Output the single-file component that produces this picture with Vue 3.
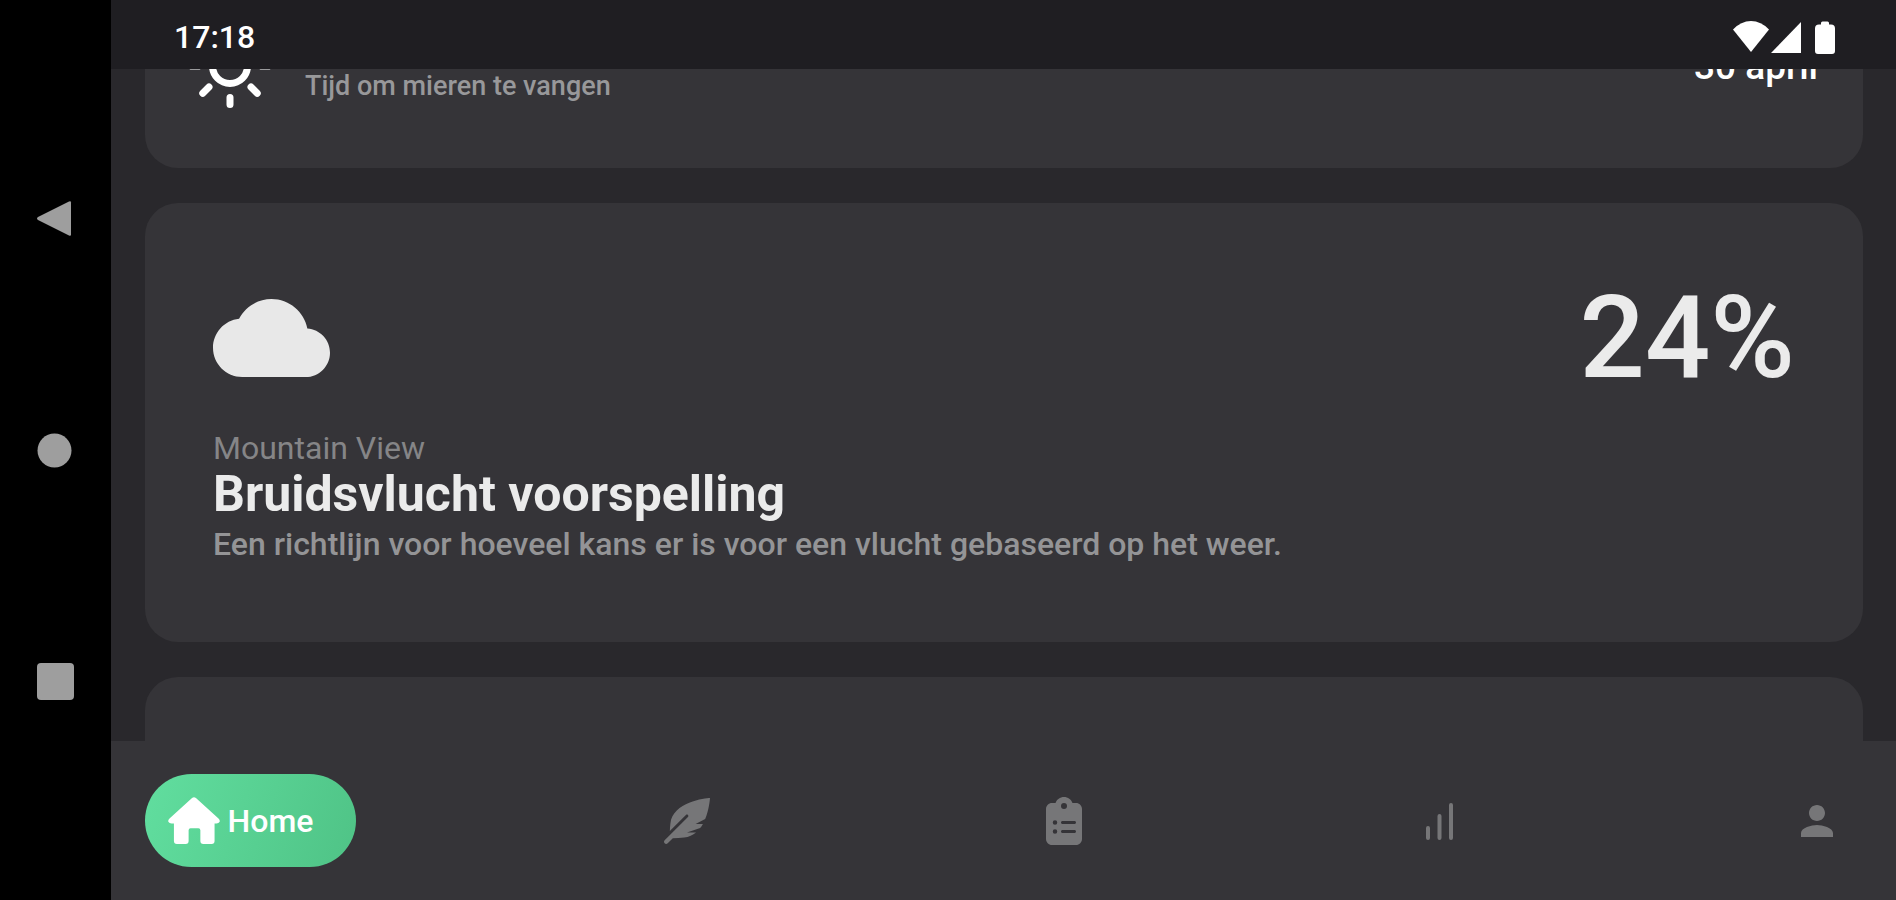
<script setup>
import { ref } from 'vue'

const active = ref('home')

const tabs = [
  {
    id: 'species',
    label: 'Soorten',
    viewBox: '0 0 512 512',
    width: 46,
    height: 46,
    path: 'M512 0C460.22 3.56 96.44 38.2 71.01 287.61c-3.09 26.66-4.84 53.44-5.99 80.24l178.87-178.69c6.25-6.25 16.4-6.25 22.65 0s6.25 16.38 0 22.63L7.04 471.03c-9.38 9.37-9.38 24.57 0 33.94 9.38 9.37 24.6 9.37 33.98 0l57.13-57.07c42.09-.14 84.15-2.53 125.96-7.36 53.48-5.44 97.02-26.47 132.58-56.54H255.74l146.79-48.88c11.25-14.89 21.37-30.71 30.45-47.12h-81.14l106.54-53.21C500.29 132.86 510.19 26.26 512 0z'
  },
  {
    id: 'tasks',
    label: 'Taken',
    viewBox: '0 0 384 512',
    width: 36,
    height: 48,
    path: 'M192 0c-41.8 0-77.4 26.7-90.5 64H64C28.7 64 0 92.7 0 128V448c0 35.3 28.7 64 64 64H320c35.3 0 64-28.7 64-64V128c0-35.3-28.7-64-64-64H282.5C269.4 26.7 233.8 0 192 0zm0 64a32 32 0 1 1 0 64 32 32 0 1 1 0-64zM72 272a24 24 0 1 1 48 0 24 24 0 1 1 -48 0zm104-16H304c8.8 0 16 7.2 16 16s-7.2 16-16 16H176c-8.8 0-16-7.2-16-16s7.2-16 16-16zM72 368a24 24 0 1 1 48 0 24 24 0 1 1 -48 0zm88 0c0-8.8 7.2-16 16-16H304c8.8 0 16 7.2 16 16s-7.2 16-16 16H176c-8.8 0-16-7.2-16-16z'
  },
  {
    id: 'stats',
    label: 'Statistieken',
    viewBox: '0 0 30 40',
    width: 30,
    height: 40,
    path: 'M3 25a2 2 0 0 1 2 2v10a2 2 0 0 1-4 0v-10a2 2 0 0 1 2-2zM14.5 13a2 2 0 0 1 2 2v22a2 2 0 0 1-4 0v-22a2 2 0 0 1 2-2zM26 2a2 2 0 0 1 2 2v33a2 2 0 0 1-4 0v-33a2 2 0 0 1 2-2z'
  },
  {
    id: 'profile',
    label: 'Profiel',
    viewBox: '4 4 16 16',
    width: 32,
    height: 32,
    path: 'M12 12c2.21 0 4-1.79 4-4s-1.79-4-4-4-4 1.79-4 4 1.79 4 4 4zm0 2c-2.67 0-8 1.34-8 4v2h16v-2c0-2.66-5.33-4-8-4z'
  }
]
</script>

<template>
  <div class="device">
    <div class="system-nav">
      <button type="button" aria-label="Terug">
        <svg width="37" height="37" viewBox="0 0 37 37"><path d="M32 1.5q2-1 2 1v32q0 2-2 1L1 20q-2-1.500 0-3z" /></svg>
      </button>
      <button type="button" aria-label="Startscherm">
        <svg width="37" height="37" viewBox="0 0 37 37"><circle cx="17.5" cy="18.5" r="17" /></svg>
      </button>
      <button type="button" aria-label="Recente apps">
        <svg width="37" height="37" viewBox="0 0 37 37"><rect width="37" height="37" rx="4" /></svg>
      </button>
    </div>

    <div class="app">
      <header class="status-bar">
        <time>17:18</time>
        <div class="status-icons">
          <svg width="36" height="32" viewBox="0 0 36 32"><path d="M0 8.5Q8 0 18 0t18 8.500L18 31z" /></svg>
          <svg width="30" height="31" viewBox="0 0 30 31"><path d="M30 0v31H0z" /></svg>
          <svg class="battery" width="20" height="33" viewBox="0 0 20 33"><path d="M6 2q0-1.500 1.500-1.500h5Q14 .5 14 2v1.500h2q4 0 4 4V30q0 3-3 3H3q-3 0-3-3V7.500q0-4 4-4h2z" /></svg>
        </div>
      </header>

      <main class="feed">
        <div class="feed-list">
          <section class="card today">
            <svg class="sun" width="84" height="84" viewBox="0 0 24 24">
              <circle cx="12" cy="12" r="5" />
              <path d="M12 1v2M12 21v2M4.220 4.220l1.420 1.420M18 18l1.780 1.780M1 12h2M21 12h2M4.220 19.780l1.780-1.780M18.360 5.640l1.420-1.420" />
            </svg>
            <p class="subtitle">Tijd om mieren te vangen</p>
            <time class="date">30 april</time>
          </section>

          <section class="card forecast">
            <div class="forecast-head">
              <svg class="cloud" width="117" height="78" viewBox="0 4 24 16">
                <path d="M19.35 10.04C18.67 6.59 15.64 4 12 4 9.11 4 6.6 5.64 5.35 8.04 2.34 8.36 0 10.91 0 14c0 3.31 2.69 6 6 6h13c2.76 0 5-2.24 5-5 0-2.64-2.05-4.78-4.65-4.96z" />
              </svg>
              <span class="chance">24%</span>
            </div>
            <p class="location">Mountain View</p>
            <h2>Bruidsvlucht voorspelling</h2>
            <p class="description">Een richtlijn voor hoeveel kans er is voor een vlucht gebaseerd op het weer.</p>
          </section>

          <section class="card next"></section>
        </div>
      </main>

      <nav class="tab-bar">
        <button type="button" class="tab home" :class="{ active: active === 'home' }" @click="active = 'home'">
          <svg width="52" height="47" viewBox="0 0 53 48">
            <path d="M24.5 1q2-1.500 4 0L51.500 22q2 2 1 3.500-.8 1.500-3 1.500H47.500V45q0 3-3 3H36q-3 0-3-3V34q0-2-2-2h-8q-2 0-2 2v11q0 3-3 3H9q-3 0-3-3V27H3.500q-2.200 0-3-1.500-1-1.500 1-3.500z" />
          </svg>
          <span>Home</span>
        </button>
        <button
          v-for="tab in tabs"
          :key="tab.id"
          type="button"
          class="tab"
          :class="{ active: active === tab.id }"
          :aria-label="tab.label"
          @click="active = tab.id"
        >
          <svg :width="tab.width" :height="tab.height" :viewBox="tab.viewBox"><path :d="tab.path" /></svg>
        </button>
      </nav>
    </div>
  </div>
</template>

<style>
body {
  margin: 0;
  background: #000;
}
</style>

<style scoped>
.device {
  display: flex;
  height: 100vh;
  font-family: Roboto, sans-serif;
  color: #ebebeb;
  background: #29282c;
}

button {
  display: flex;
  align-items: center;
  padding: 0;
  border: 0;
  background: none;
  font: inherit;
  cursor: pointer;
}

svg {
  display: block;
  flex: none;
}

h2,
p {
  margin: 0;
}

/* Android navigation */
.system-nav {
  flex: none;
  box-sizing: border-box;
  width: 111px;
  padding: 6px 0 6px 37px;
  display: flex;
  flex-direction: column;
  align-items: flex-start;
  justify-content: space-evenly;
  background: #000;
}

.system-nav svg {
  fill: #9e9e9e;
}

.app {
  flex: 1;
  min-width: 0;
  display: flex;
  flex-direction: column;
}

.status-bar {
  flex: none;
  box-sizing: border-box;
  height: 69px;
  padding: 5px 61px 0 63px;
  display: flex;
  align-items: center;
  justify-content: space-between;
  background: #1f1e22;
  color: #fff;
  font-size: 32px;
  font-weight: 500;
}

.status-icons {
  display: flex;
  align-items: center;
  gap: 2px;
  fill: #fff;
}

.battery {
  margin-left: 12px;
}

.feed {
  flex: 1;
  min-height: 0;
  overflow: hidden;
}

/* list is scrolled halfway past the first card */
.feed-list {
  margin-top: -101px;
  padding: 0 33px 0 34px;
  display: flex;
  flex-direction: column;
  gap: 35px;
}

.card {
  border-radius: 33px;
  background: #353438;
}

.today {
  padding: 56px 45px 60px 43px;
  display: flex;
  align-items: center;
  gap: 33px;
}

.sun {
  fill: none;
  stroke: #fff;
  stroke-width: 2;
  stroke-linecap: round;
}

.subtitle {
  flex: 1;
  align-self: flex-end;
  color: #98989a;
  font-size: 27px;
  font-weight: 500;
  line-height: 44px;
}

.date {
  color: #fff;
  font-size: 37px;
  font-weight: 500;
}

.forecast {
  padding: 67px 68px 76px;
}

.forecast-head {
  display: flex;
  align-items: center;
  justify-content: space-between;
  margin-bottom: 24px;
}

.cloud {
  fill: #e8e8e8;
}

.chance {
  font-size: 115px;
  font-weight: 500;
  line-height: 136px;
}

.location {
  color: #858587;
  font-size: 32px;
  line-height: 36px;
}

h2 {
  font-size: 50px;
  font-weight: 700;
  line-height: 56px;
}

.description {
  color: #949496;
  font-size: 32px;
  font-weight: 500;
  line-height: 44px;
}

.next {
  height: 439px;
}

.tab-bar {
  flex: none;
  padding: 33px 33px 33px 34px;
  display: flex;
  align-items: center;
  justify-content: space-between;
  background: #353438;
}

.tab {
  width: 92px;
  height: 93px;
  justify-content: center;
  fill: #767678;
}

.home {
  width: 211px;
  gap: 8px;
  border-radius: 47px;
  padding-right: 20px;
}

.home.active {
  background: linear-gradient(110deg, #61de9f, #4fc386);
  color: #fff;
  font-size: 32px;
  font-weight: 500;
  fill: #fff;
}
</style>
